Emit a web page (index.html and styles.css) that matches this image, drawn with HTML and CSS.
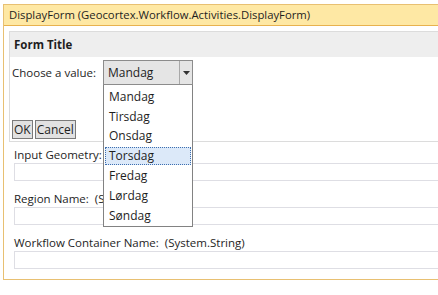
FILE: index.html
```html
<!DOCTYPE html>
<html lang="en">
<head>
    <meta charset="UTF-8">
    <title>DisplayForm</title>
    <link rel="stylesheet" href="styles.css">
</head>
<body>
    <div class="window">
        <div class="titlebar">DisplayForm (Geocortex.Workflow.Activities.DisplayForm)</div>
        <div class="window-body">
            <div class="form">
                <div class="form-header">Form Title</div>
                <div class="form-body">
                    <div class="field-row">
                        <span class="field-label">Choose a value:</span>
                        <div class="combo">
                            <div class="combo-box">
                                <span class="combo-value">Mandag</span>
                                <span class="combo-arrow">
                                    <svg width="7" height="4" viewBox="0 0 7 4"><path d="M0 0h7L3.5 4z" fill="#333"/></svg>
                                </span>
                            </div>
                            <ul class="dropdown">
                                <li>Mandag</li>
                                <li>Tirsdag</li>
                                <li>Onsdag</li>
                                <li class="selected">Torsdag</li>
                                <li>Fredag</li>
                                <li>Lørdag</li>
                                <li>Søndag</li>
                            </ul>
                        </div>
                    </div>
                    <div class="buttons">
                        <button class="btn">OK</button>
                        <button class="btn">Cancel</button>
                    </div>
                </div>
            </div>
            <div class="param first">
                <div class="param-label">Input Geometry:</div>
                <div class="param-box"></div>
            </div>
            <div class="param">
                <div class="param-label">Region Name:&nbsp; (System.String)</div>
                <div class="param-box"></div>
            </div>
            <div class="param">
                <div class="param-label">Workflow Container Name:&nbsp; (System.String)</div>
                <div class="param-box"></div>
            </div>
        </div>
    </div>
</body>
</html>
```

FILE: styles.css
```css
body {
    margin: 0;
    padding: 4px 0 0 3px;
    font-family: "Open Sans", "Noto Sans", sans-serif;
    font-size: 11.5px;
    color: #1e1e1e;
    background: #fff;
    overflow: hidden;
}

.window {
    width: 434px;
    border: 1px solid #e8c072;
    border-right: none;
}

.titlebar {
    height: 20px;
    line-height: 20px;
    padding-left: 5px;
    font-size: 11.3px;
    background-color: #fee8a4;
    border-bottom: 1px solid #e8b24e;
}

.window-body {
    padding: 5px 0 10px 5px;
}

.form {
    border: 1px solid #dcdcdc;
    border-right: none;
}

.form-header {
    height: 25px;
    line-height: 25px;
    padding-left: 4px;
    background-color: #eeeeee;
    font-weight: bold;
}

.form-body {
    padding: 3px 0 2px 2px;
}

.field-row {
    display: flex;
    align-items: center;
}

.field-label {
    width: 91px;
}

.combo {
    position: relative;
}

.combo-box {
    display: flex;
    width: 88px;
    height: 23px;
    border: 1px solid #8c8c8c;
    background-color: #e5e5e5;
}

.combo-value {
    flex: 1;
    line-height: 23px;
    padding-left: 4px;
    font-size: 12px;
}

.combo-arrow {
    width: 12px;
    border-left: 1px solid #a8a8a8;
    display: flex;
    align-items: center;
    justify-content: center;
}

.dropdown {
    position: absolute;
    top: 25px;
    left: 0;
    width: 88px;
    margin: 0;
    padding: 1px 0;
    list-style: none;
    background: #fff;
    border: 1px solid #828282;
    border-top: none;
    z-index: 2;
}

.dropdown li {
    height: 16px;
    line-height: 16px;
    margin: 1.8px 1px 0;
    padding-left: 3px;
    font-size: 12px;
    border: 1px solid transparent;
}

.dropdown li.selected {
    background-color: #dce9f9;
    border: 1px dotted #3d6fb0;
}

.buttons {
    display: flex;
    gap: 2px;
    margin-top: 35px;
}

.btn {
    font-family: inherit;
    font-size: 12px;
    height: 19px;
    padding: 0 1px;
    margin: 0;
    color: #1e1e1e;
    background-color: #e1e1e1;
    border: 1px solid #7a7a7a;
    line-height: 17px;
}

.param {
    padding: 9px 0 0 0;
}

.param.first {
    padding-top: 4px;
}

.param-label {
    height: 17px;
    line-height: 17px;
    padding-left: 5px;
}

.param-box {
    height: 16px;
    margin-left: 5px;
    border: 1px solid #dedee4;
    border-right: none;
}
```
